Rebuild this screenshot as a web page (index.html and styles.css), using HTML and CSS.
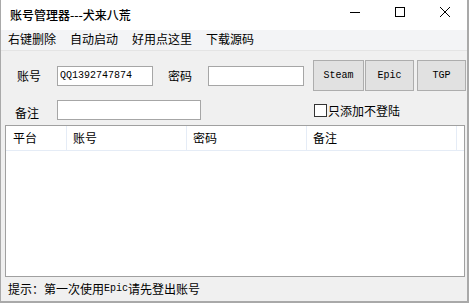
FILE: index.html
```html
<!DOCTYPE html>
<html lang="zh">
<head>
<meta charset="utf-8">
<title>账号管理器</title>
<link rel="stylesheet" href="styles.css">
</head>
<body>
<div class="window">
  <div class="titlebar">
    <div class="title">账号管理器---犬来八荒</div>
    <div class="caption">
      <div class="cap-btn"><svg width="10" height="10" viewBox="0 0 10 10"><path d="M0 5.5H10" stroke="#000" stroke-width="1"/></svg></div>
      <div class="cap-btn"><svg width="10" height="10" viewBox="0 0 10 10"><rect x="0.5" y="0.5" width="9" height="9" fill="none" stroke="#000" stroke-width="1"/></svg></div>
      <div class="cap-btn"><svg width="10" height="10" viewBox="0 0 10 10"><path d="M0 0L10 10M10 0L0 10" stroke="#000" stroke-width="1"/></svg></div>
    </div>
  </div>
  <div class="menubar">
    <span class="menu-item">右键删除</span>
    <span class="menu-item">自动启动</span>
    <span class="menu-item">好用点这里</span>
    <span class="menu-item">下载源码</span>
  </div>
  <div class="form">
    <div class="row row1">
      <span class="label">账号</span>
      <div class="input w96"><span class="mono">QQ1392747874</span></div>
      <span class="label lbl2">密码</span>
      <div class="input w96"></div>
      <div class="btn b-steam"><span class="mono">Steam</span></div>
      <div class="btn b-epic"><span class="mono">Epic</span></div>
      <div class="btn b-tgp"><span class="mono">TGP</span></div>
    </div>
    <div class="row row2">
      <span class="label lbl-note">备注</span>
      <div class="input w144"></div>
      <label class="check"><span class="box"></span><span class="check-text">只添加不登陆</span></label>
    </div>
  </div>
  <div class="listview">
    <div class="lv-header">
      <div class="col c1">平台</div>
      <div class="col c2">账号</div>
      <div class="col c3">密码</div>
      <div class="col c4">备注</div>
      <div class="col c5"></div>
    </div>
    <div class="lv-body"></div>
  </div>
  <div class="status">提示：第一次使用<span class="mono">Epic</span>请先登出账号</div>
</div>
</body>
</html>
```
FILE: styles.css
```css
* { box-sizing: border-box; }
html, body { margin: 0; padding: 0; }
body {
  width: 469px;
  height: 303px;
  overflow: hidden;
  font-family: "Noto Sans CJK SC", "Liberation Sans", sans-serif;
  font-size: 12px;
  color: #000;
  background: #fff;
}
.window {
  width: 469px;
  height: 303px;
  display: flex;
  flex-direction: column;
  border-left: 1px solid #a9a9a9;
  border-right: 2px solid #a9a9a9;
  border-bottom: 2px solid #a9a9a9;
  background: #f0f0f0;
}
.titlebar {
  height: 30px;
  flex: none;
  display: flex;
  align-items: center;
  justify-content: space-between;
  background: #fff;
}
.title {
  padding-left: 9px;
  font-size: 12px;
  font-weight: 500;
  line-height: 16px;
  padding-bottom: 1px;
}
.caption { display: flex; height: 30px; }
.cap-btn {
  width: 45px;
  height: 30px;
  display: flex;
  align-items: center;
  justify-content: center;
  padding-bottom: 6px;
}
.menubar {
  height: 21px;
  flex: none;
  display: flex;
  align-items: center;
  gap: 14px;
  padding-left: 7px;
  background: #f3f4f6;
  border-bottom: 1px solid #e4e4e4;
  line-height: 16px;
  padding-bottom: 2px;
}
.form {
  padding-top: 9px;
  padding-left: 0;
  display: flex;
  flex-direction: column;
}
.row { display: flex; align-items: center; }
.row1 { height: 31px; padding-left: 16px; }
.row2 { height: 20px; margin-top: 9px; padding-left: 14px; }
.label { width: 40px; line-height: 16px; }
.lbl2 { margin-left: 15px; }
.lbl-note { width: 42px; margin-top: 5px; }
.input {
  height: 20px;
  background: #fff;
  border: 1px solid #a6a6a6;
  display: flex;
  align-items: center;
  padding-left: 2px;
}
.w96 { width: 96px; }
.w144 { width: 144px; }
.mono {
  font-family: "Liberation Mono", "DejaVu Sans Mono", monospace;
  font-size: 10px;
}
.btn {
  height: 31px;
  background: #e1e1e1;
  border: 1px solid #adadad;
  display: flex;
  align-items: center;
  justify-content: center;
}
.b-steam { width: 51px; margin-left: 9px; }
.b-epic { width: 49px; margin-left: 1px; }
.b-tgp { width: 49px; margin-left: 3px; }
.check {
  display: flex;
  align-items: center;
  margin-left: 113px;
  margin-top: 1px;
}
.box {
  width: 13px;
  height: 13px;
  background: #fff;
  border: 1px solid #333;
}
.check-text { margin-left: 1px; line-height: 16px; }
.listview {
  margin-top: 5px;
  margin-left: 4px;
  width: 460px;
  height: 152px;
  flex: none;
  background: #fff;
  border: 1px solid #a0a0a0;
  display: flex;
  flex-direction: column;
}
.lv-header {
  height: 25px;
  display: flex;
  border-bottom: 1px solid #e5ecf6;
}
.col {
  padding-left: 7px;
  display: flex;
  align-items: center;
  border-right: 1px solid #e5ecf6;
  line-height: 16px;
}
.c1 { width: 61px; }
.c2 { width: 120px; padding-left: 6px; }
.c3 { width: 120px; padding-left: 6px; }
.c4 { width: 150px; padding-left: 6px; }
.c5 { flex: 1; border-right: none; }
.lv-body { flex: 1; }
.status {
  flex: 1;
  display: flex;
  align-items: center;
  padding-left: 7px;
  line-height: 16px;
}
```
